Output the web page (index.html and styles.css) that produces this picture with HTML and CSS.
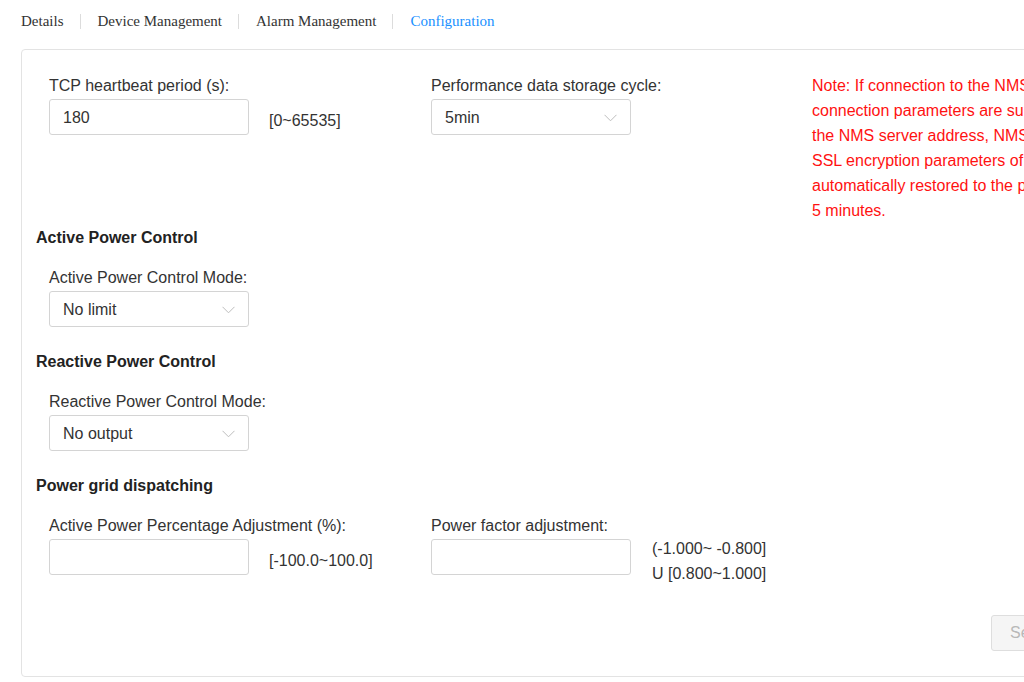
FILE: index.html
```html
<!DOCTYPE html>
<html>
<head>
<meta charset="utf-8">
<link rel="stylesheet" href="styles.css">
</head>
<body>
<div class="page">
  <nav class="tabs">
    <span class="tab">Details</span>
    <span class="sep"></span>
    <span class="tab">Device Management</span>
    <span class="sep"></span>
    <span class="tab">Alarm Management</span>
    <span class="sep"></span>
    <span class="tab active">Configuration</span>
  </nav>

  <section class="card">
    <div class="row row-top">
      <div class="field">
        <div class="label">TCP heartbeat period (s):</div>
        <div class="control-line">
          <div class="input"><span class="value">180</span></div>
          <div class="range">[0~65535]</div>
        </div>
      </div>
      <div class="field">
        <div class="label">Performance data storage cycle:</div>
        <div class="control-line">
          <div class="input select"><span class="value">5min</span><svg class="chev" width="13" height="8" viewBox="0 0 13 8"><path d="M0.5 0.8 L6.5 6.8 L12.5 0.8" fill="none" stroke="#bdbdbd" stroke-width="1"/></svg></div>
        </div>
      </div>
      <div class="note">Note: If connection to the NMS fails after the<br>connection parameters are submitted, the device uses<br>the NMS server address, NMS port number, and<br>SSL encryption parameters of the last successful<br>automatically restored to the previous values after<br>5 minutes.</div>
    </div>

    <h3 class="section-title">Active Power Control</h3>
    <div class="row">
      <div class="field">
        <div class="label">Active Power Control Mode:</div>
        <div class="control-line">
          <div class="input select"><span class="value">No limit</span><svg class="chev" width="13" height="8" viewBox="0 0 13 8"><path d="M0.5 0.8 L6.5 6.8 L12.5 0.8" fill="none" stroke="#bdbdbd" stroke-width="1"/></svg></div>
        </div>
      </div>
    </div>

    <h3 class="section-title">Reactive Power Control</h3>
    <div class="row">
      <div class="field">
        <div class="label">Reactive Power Control Mode:</div>
        <div class="control-line">
          <div class="input select"><span class="value">No output</span><svg class="chev" width="13" height="8" viewBox="0 0 13 8"><path d="M0.5 0.8 L6.5 6.8 L12.5 0.8" fill="none" stroke="#bdbdbd" stroke-width="1"/></svg></div>
        </div>
      </div>
    </div>

    <h3 class="section-title">Power grid dispatching</h3>
    <div class="row">
      <div class="field">
        <div class="label">Active Power Percentage Adjustment (%):</div>
        <div class="control-line">
          <div class="input"></div>
          <div class="range">[-100.0~100.0]</div>
        </div>
      </div>
      <div class="field">
        <div class="label">Power factor adjustment:</div>
        <div class="control-line">
          <div class="input"></div>
          <div class="range range-2">(-1.000~ -0.800]<br>U [0.800~1.000]</div>
        </div>
      </div>
    </div>

    <div class="actions">
      <button class="btn" disabled>Set</button>
    </div>
  </section>
</div>
</body>
</html>
```

FILE: styles.css
```css
html, body {
  margin: 0;
  padding: 0;
  background: #ffffff;
  overflow: hidden;
}

.page {
  width: 1240px;
  padding: 11px 0 0 21px;
  font-family: "Liberation Sans", Arial, sans-serif;
  color: #333333;
}

.tabs {
  display: flex;
  align-items: center;
  height: 20px;
  font-family: "Liberation Serif", "Times New Roman", serif;
  font-size: 15px;
  line-height: 20px;
  color: #333333;
}

.tab.active {
  color: #1890ff;
}

.sep {
  width: 1px;
  height: 15px;
  background: #dcdcdc;
  margin: 0 17px 0 16px;
}

.card {
  margin-top: 18px;
  border: 1px solid #e3e3e3;
  border-radius: 4px;
  padding: 25px 28px 25px 14px;
  width: 1035px;
}

.row {
  display: grid;
  grid-template-columns: 382px 381px auto;
  padding-left: 13px;
}

.row-top {
  margin-bottom: 4px;
}

.field {
  display: flex;
  flex-direction: column;
}

.label {
  font-size: 16px;
  line-height: 20px;
  color: #333333;
  padding-top: 1px;
  margin-bottom: -1px;
}

.control-line {
  display: flex;
  align-items: flex-start;
  height: 36px;
  margin-top: 4px;
}

.input {
  box-sizing: border-box;
  width: 200px;
  height: 36px;
  flex: none;
  border: 1px solid #d4d4d4;
  border-radius: 3px;
  background: #ffffff;
  display: flex;
  align-items: center;
  justify-content: space-between;
  padding: 0 13px 0 13px;
  font-size: 16px;
  color: #333333;
}

.value {
  margin-top: 1px;
}

.chev {
  display: block;
  margin-top: 1px;
}

.range {
  margin-left: 20px;
  margin-top: 9px;
  font-size: 16px;
  line-height: 25px;
  color: #333333;
  white-space: nowrap;
}

.range-2 {
  margin-left: 21px;
  margin-top: -3px;
}

.note {
  margin-top: -2px;
  font-size: 16px;
  line-height: 25px;
  color: #ff1111;
  white-space: nowrap;
}

.section-title {
  margin: 0;
  margin-top: 24px;
  padding-top: 1px;
  font-size: 16px;
  line-height: 20px;
  font-weight: bold;
  color: #222222;
}

.row-top + .section-title {
  margin-top: 0;
}

.section-title + .row {
  margin-top: 19px;
}

.actions {
  display: flex;
  justify-content: flex-end;
  margin-top: 40px;
}

.btn {
  box-sizing: border-box;
  height: 36px;
  width: 80px;
  border: 1px solid #dedede;
  border-radius: 3px;
  background: #f5f5f5;
  color: #b8b8b8;
  font-family: "Liberation Sans", Arial, sans-serif;
  font-size: 16px;
  padding: 0 18px;
  text-align: left;
}
```
